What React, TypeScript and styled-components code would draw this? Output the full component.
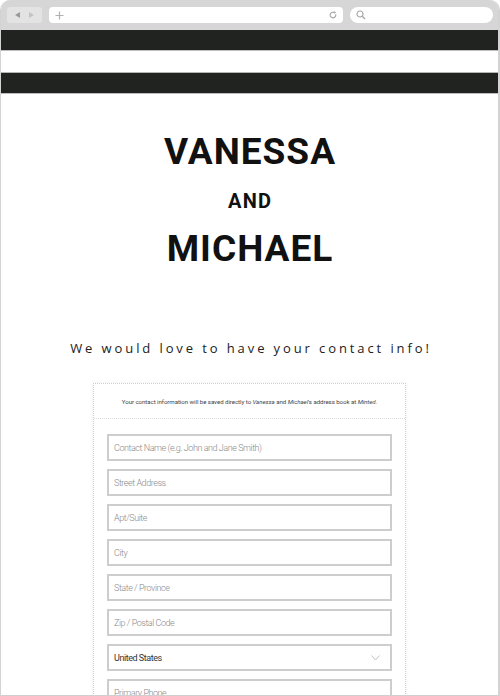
import React from 'react';
import styled, { createGlobalStyle } from 'styled-components';

const GlobalStyle = createGlobalStyle`
  html, body {
    margin: 0;
    padding: 0;
    background: #ffffff;
  }
  body {
    font-family: 'Lato', 'Liberation Sans', sans-serif;
  }
`;

const Window = styled.div`
  width: 500px;
  height: 696px;
  box-sizing: border-box;
  display: flex;
  flex-direction: column;
  overflow: hidden;
  border-radius: 10px 10px 0 0;
  border-left: 1px solid #d3d3d3;
  border-right: 2px solid #d3d3d3;
  border-bottom: 1px solid #cfcfcf;
  background: #ffffff;
`;

const Chrome = styled.div`
  height: 30px;
  flex: none;
  background: #d6d6d6;
  display: flex;
  align-items: center;
  gap: 7px;
  padding: 0 5px 0 6px;
  box-sizing: border-box;
`;

const NavGroup = styled.div`
  width: 35px;
  height: 16px;
  background: #e3e3e3;
  border-radius: 3px;
  display: flex;
  align-items: center;
  justify-content: center;
  gap: 7px;
`;

const AddressBar = styled.div`
  width: 294px;
  height: 16px;
  background: #ffffff;
  border-radius: 4px;
  display: flex;
  align-items: center;
  justify-content: space-between;
  padding: 0 6px 0 6px;
  box-sizing: border-box;
`;

const SearchBar = styled.div`
  flex: 1;
  height: 16px;
  background: #ffffff;
  border-radius: 8px;
  display: flex;
  align-items: center;
  padding: 0 6px;
  box-sizing: border-box;
`;

const Stripe = styled.div<{ $dark?: boolean }>`
  flex: none;
  height: ${(p) => (p.$dark ? '20px' : '21px')};
  background: ${(p) => (p.$dark ? '#212320' : '#ffffff')};
  border-bottom: 1px solid ${(p) => (p.$dark ? '#bdbdbd' : '#b5b5b5')};
`;

const Page = styled.div`
  display: flex;
  flex-direction: column;
  align-items: center;
  padding-top: 37px;
`;

const Names = styled.h1`
  margin: 0;
  display: flex;
  flex-direction: column;
  align-items: center;
  font-family: 'Roboto', 'DejaVu Sans', sans-serif;
  font-weight: 700;
  color: #111111;
`;

const BigName = styled.span`
  font-size: 37px;
  line-height: 42px;
  letter-spacing: 1px;
  margin-right: -1px;
`;

const Amp = styled.span`
  font-size: 20px;
  line-height: 24px;
  letter-spacing: 1.2px;
  margin: 16px -1.2px 15px 0;
`;

const Tagline = styled.p`
  margin: 69px 0 0;
  font-family: 'Open Sans', 'Liberation Sans', sans-serif;
  font-weight: 400;
  font-size: 13px;
  letter-spacing: 2.9px;
  color: #222222;
  margin-right: -3px;
`;

const Card = styled.div`
  margin-top: 26px;
  width: 313px;
  box-sizing: border-box;
  border: 1px dotted #cfcfcf;
  box-shadow: 0 0 3px rgba(0, 0, 0, 0.08);
  border-bottom: none;
`;

const CardNote = styled.div`
  height: 34px;
  display: flex;
  align-items: center;
  justify-content: center;
  border-bottom: 1px dotted #dcdcdc;
  font-family: 'Roboto', 'Liberation Sans', sans-serif;
  font-size: 6.1px;
  color: #444444;
  letter-spacing: -0.05px;

  em {
    font-style: italic;
  }
`;

const Fields = styled.div`
  display: flex;
  flex-direction: column;
  gap: 8px;
  padding: 15px 13px 0;
`;

const Field = styled.div<{ $filled?: boolean }>`
  height: 27px;
  box-sizing: border-box;
  border: 2px solid #cdcdcd;
  display: flex;
  align-items: center;
  justify-content: space-between;
  padding: 0 10px 0 5px;
  font-family: 'Roboto', 'Liberation Sans', sans-serif;
  font-weight: ${(p) => (p.$filled ? 400 : 300)};
  font-size: 9px;
  letter-spacing: -0.45px;
  color: ${(p) => (p.$filled ? '#333333' : '#8a8a8a')};
`;

const fields = [
  'Contact Name (e.g. John and Jane Smith)',
  'Street Address',
  'Apt/Suite',
  'City',
  'State / Province',
  'Zip / Postal Code',
];

const App: React.FC = () => {
  return (
    <>
      <GlobalStyle />
      <Window>
        <Chrome>
          <NavGroup>
            <svg width="6" height="6" viewBox="0 0 6 6">
              <path d="M5 0 L0 3 L5 6 Z" fill="#9a9a9a" />
            </svg>
            <svg width="6" height="6" viewBox="0 0 6 6">
              <path d="M1 0 L6 3 L1 6 Z" fill="#c4c4c4" />
            </svg>
          </NavGroup>
          <AddressBar>
            <svg width="9" height="9" viewBox="0 0 9 9">
              <path d="M4.5 0.5 V8.5 M0.5 4.5 H8.5" stroke="#b0b0b0" strokeWidth="1.2" />
            </svg>
            <svg width="8" height="8" viewBox="0 0 8 8">
              <path d="M6.6 3.2 A2.8 2.8 0 1 1 5.2 1.6" stroke="#a5a5a5" strokeWidth="1.1" fill="none" />
              <path d="M4.6 0.2 L7 1 L5.4 3 Z" fill="#a5a5a5" />
            </svg>
          </AddressBar>
          <SearchBar>
            <svg width="10" height="10" viewBox="0 0 10 10">
              <circle cx="4" cy="4" r="3" stroke="#a8a8a8" strokeWidth="1.2" fill="none" />
              <path d="M6.2 6.2 L9 9" stroke="#a8a8a8" strokeWidth="1.4" />
            </svg>
          </SearchBar>
        </Chrome>
        <Stripe $dark />
        <Stripe />
        <Stripe $dark />
        <Page>
          <Names>
            <BigName>VANESSA</BigName>
            <Amp>AND</Amp>
            <BigName>MICHAEL</BigName>
          </Names>
          <Tagline>We would love to have your contact info!</Tagline>
          <Card>
            <CardNote>
              <span>
                Your contact information will be saved directly to <em>Vanessa</em> and{' '}
                <em>Michael</em>'s address book at <em>Minted</em>.
              </span>
            </CardNote>
            <Fields>
              {fields.map((f) => (
                <Field key={f}>{f}</Field>
              ))}
              <Field $filled>
                United States
                <svg width="9" height="6" viewBox="0 0 9 6">
                  <path d="M0.5 0.5 L4.5 5 L8.5 0.5" stroke="#c0c0c0" strokeWidth="1" fill="none" />
                </svg>
              </Field>
              <Field>Primary Phone</Field>
            </Fields>
          </Card>
        </Page>
      </Window>
    </>
  );
};

export default App;
